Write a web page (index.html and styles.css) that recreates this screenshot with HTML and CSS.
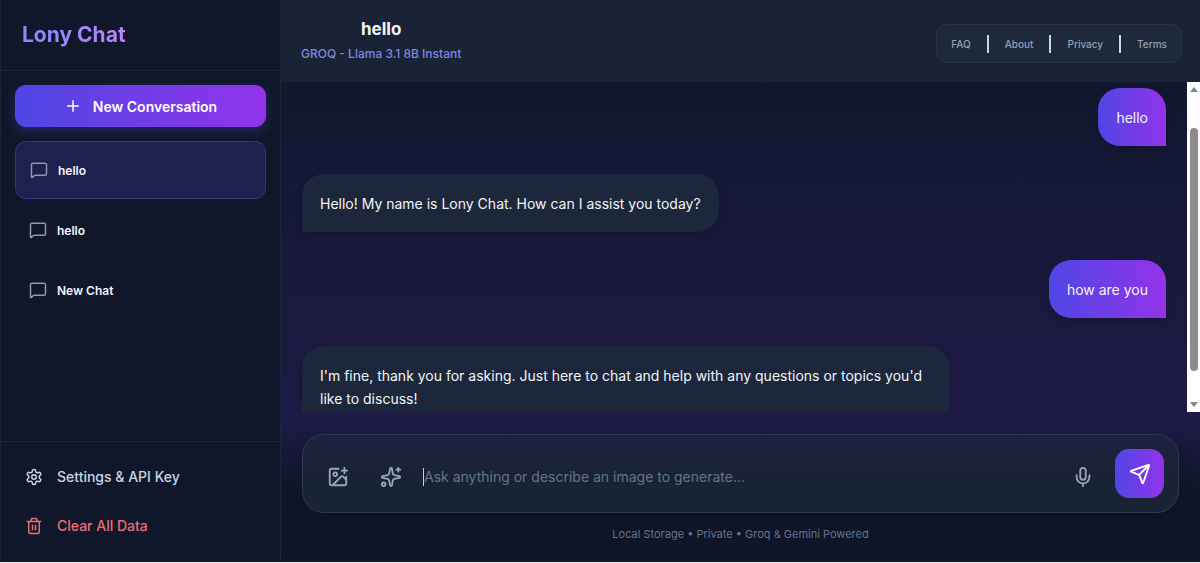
FILE: index.html
```html
<!DOCTYPE html>
<html lang="en">
<head>
<meta charset="utf-8">
<meta name="viewport" content="width=device-width, initial-scale=1">
<title>Lony Chat</title>
<link rel="stylesheet" href="styles.css">
</head>
<body>
<svg class="sprite" aria-hidden="true">
  <symbol id="message" viewBox="0 0 24 24"><path d="M22 17a2 2 0 0 1-2 2H6.8a2 2 0 0 0-1.4.6L3.2 21.8A.7.7 0 0 1 2 21.3V5a2 2 0 0 1 2-2h16a2 2 0 0 1 2 2z"/></symbol>
</svg>
<div class="app">
  <aside class="sidebar">
    <div class="brand"><h1 class="brand-name">Lony Chat</h1></div>
    <div class="conversations">
      <button class="new-chat" type="button">
        <svg class="icon icon-md" viewBox="0 0 24 24"><path d="M5 12h14M12 5v14"/></svg>
        New Conversation
      </button>
      <nav class="chat-list" aria-label="Conversations">
        <button class="chat-item active" type="button"><svg class="icon icon-md"><use href="#message"/></svg>hello</button>
        <button class="chat-item" type="button"><svg class="icon icon-md"><use href="#message"/></svg>hello</button>
        <button class="chat-item" type="button"><svg class="icon icon-md"><use href="#message"/></svg>New Chat</button>
      </nav>
    </div>
    <div class="sidebar-footer">
      <button class="side-action" type="button">
        <svg class="icon icon-md" viewBox="0 0 24 24"><path d="M12.22 2h-.44a2 2 0 0 0-2 2v.18a2 2 0 0 1-1 1.73l-.43.25a2 2 0 0 1-2 0l-.15-.08a2 2 0 0 0-2.73.73l-.22.38a2 2 0 0 0 .73 2.73l.15.1a2 2 0 0 1 1 1.72v.51a2 2 0 0 1-1 1.74l-.15.09a2 2 0 0 0-.73 2.73l.22.38a2 2 0 0 0 2.73.73l.15-.08a2 2 0 0 1 2 0l.43.25a2 2 0 0 1 1 1.73V20a2 2 0 0 0 2 2h.44a2 2 0 0 0 2-2v-.18a2 2 0 0 1 1-1.73l.43-.25a2 2 0 0 1 2 0l.15.08a2 2 0 0 0 2.73-.73l.22-.39a2 2 0 0 0-.73-2.73l-.15-.08a2 2 0 0 1-1-1.74v-.5a2 2 0 0 1 1-1.74l.15-.09a2 2 0 0 0 .73-2.73l-.22-.38a2 2 0 0 0-2.73-.73l-.15.08a2 2 0 0 1-2 0l-.43-.25a2 2 0 0 1-1-1.73V4a2 2 0 0 0-2-2z"/><circle cx="12" cy="12" r="3"/></svg>
        Settings &amp; API Key
      </button>
      <button class="side-action danger" type="button">
        <svg class="icon icon-md" viewBox="0 0 24 24"><path d="M3 6h18M19 6v14a2 2 0 0 1-2 2H7a2 2 0 0 1-2-2V6M8 6V4a2 2 0 0 1 2-2h4a2 2 0 0 1 2 2v2M10 11v6M14 11v6"/></svg>
        Clear All Data
      </button>
    </div>
  </aside>

  <main class="main">
    <header class="topbar">
      <div class="heading">
        <h2 class="chat-title">hello</h2>
        <p class="model">GROQ - Llama 3.1 8B Instant</p>
      </div>
      <nav class="links" aria-label="Information">
        <a class="link" href="#faq">FAQ</a><span class="divider"></span>
        <a class="link" href="#about">About</a><span class="divider"></span>
        <a class="link" href="#privacy">Privacy</a><span class="divider"></span>
        <a class="link" href="#terms">Terms</a>
      </nav>
    </header>

    <section class="stage">
      <div class="messages">
        <p class="bubble user">hello</p>
        <p class="bubble bot">Hello! My name is Lony Chat. How can I assist you today?</p>
        <p class="bubble user">how are you</p>
        <p class="bubble bot">I'm fine, thank you for asking. Just here to chat and help with any questions or topics you'd like to discuss!</p>
      </div>
      <div class="scrollbar" aria-hidden="true">
        <svg class="arrow" viewBox="0 0 8 5"><path d="M4 0l4 5H0z"/></svg>
        <div class="track"><div class="thumb"></div></div>
        <svg class="arrow" viewBox="0 0 8 5"><path d="M0 0h8L4 5z"/></svg>
      </div>
    </section>

    <footer class="composer">
      <form class="prompt">
        <button class="tool" type="button" aria-label="Add image">
          <svg class="icon icon-lg" viewBox="0 0 24 24"><path d="M16 5h6M19 2v6M21 11.5V19a2 2 0 0 1-2 2H5a2 2 0 0 1-2-2V5a2 2 0 0 1 2-2h7.5M21 15l-3.086-3.086a2 2 0 0 0-2.828 0L6 21"/><circle cx="9" cy="9" r="2"/></svg>
        </button>
        <button class="tool" type="button" aria-label="Generate image">
          <svg class="icon icon-lg" viewBox="0 0 24 24"><path d="M11.017 2.814a1 1 0 0 1 1.966 0l1.051 5.558a2 2 0 0 0 1.594 1.594l5.558 1.051a1 1 0 0 1 0 1.966l-5.558 1.051a2 2 0 0 0-1.594 1.594l-1.051 5.558a1 1 0 0 1-1.966 0l-1.051-5.558a2 2 0 0 0-1.594-1.594l-5.558-1.051a1 1 0 0 1 0-1.966l5.558-1.051a2 2 0 0 0 1.594-1.594zM20 2v4M22 4h-4"/><circle cx="4" cy="20" r="2"/></svg>
        </button>
        <span class="caret"></span>
        <input class="field" type="text" aria-label="Message" placeholder="Ask anything or describe an image to generate...">
        <button class="tool" type="button" aria-label="Voice input">
          <svg class="icon icon-lg" viewBox="0 0 24 24"><path d="M12 19v3M19 10v2a7 7 0 0 1-14 0v-2"/><rect x="9" y="2" width="6" height="13" rx="3"/></svg>
        </button>
        <button class="send" type="submit" aria-label="Send">
          <svg class="icon icon-lg" viewBox="0 0 24 24"><path d="M14.536 21.686a.5.5 0 0 0 .937-.024l6.5-19a.496.496 0 0 0-.635-.635l-19 6.5a.5.5 0 0 0-.024.937l7.93 3.18a2 2 0 0 1 1.112 1.11zM21.854 2.147l-10.94 10.939"/></svg>
        </button>
      </form>
      <p class="note">Local Storage • Private • Groq &amp; Gemini Powered</p>
    </footer>
  </main>
</div>
</body>
</html>
```

FILE: styles.css
```css
* { box-sizing: border-box; }

body {
  margin: 0;
  background: #e8e9f2;
  font-family: Inter, "Liberation Sans", sans-serif;
  color: #f1f5f9;
}

h1, h2, p { margin: 0; }

button, input { font: inherit; color: inherit; background: none; border: 0; padding: 0; }
button { cursor: pointer; }

.sprite { display: none; }

.icon {
  flex: none;
  fill: none;
  stroke: currentColor;
  stroke-width: 2;
  stroke-linecap: round;
  stroke-linejoin: round;
}
.icon-md { width: 18px; height: 18px; }
.icon-lg { width: 22px; height: 22px; }

.app {
  display: flex;
  height: calc(100vh - 1px);
  background: linear-gradient(#0f172a, #1e1a47 75%, #0f172a 87%, #101428);
}

/* Sidebar */
.sidebar {
  display: flex;
  flex-direction: column;
  flex: none;
  width: 281px;
  background: #10172a;
  border: solid #1c2438;
  border-width: 0 1px;
}

.brand {
  padding: 20px 21px 21px;
  border-bottom: 1px solid #1f2639;
}
.brand-name {
  width: max-content;
  font-size: 21px;
  line-height: 29px;
  font-weight: 700;
  color: transparent;
  background: linear-gradient(90deg, #818cf8, #c084fc);
  background-clip: text;
}

.conversations { flex: 1; min-height: 0; padding: 14px; overflow: hidden; }

.new-chat {
  display: flex;
  align-items: center;
  justify-content: center;
  gap: 11px;
  width: 100%;
  height: 42px;
  border-radius: 11px;
  background: linear-gradient(90deg, #4f46e5, #9333ea);
  box-shadow: 0 4px 12px #4f46e54d;
  font-size: 14px;
  font-weight: 600;
  color: #fff;
}

.chat-list { display: flex; flex-direction: column; gap: 2px; margin-top: 14px; }
.chat-item {
  display: flex;
  align-items: center;
  gap: 10px;
  height: 58px;
  padding: 0 14px;
  border-radius: 11px;
  font-size: 12px;
  font-weight: 600;
}
.chat-item .icon { color: #8f97ad; }
.chat-item.active { background: #1e204f; border: 1px solid #34377a; }

.sidebar-footer {
  display: flex;
  flex-direction: column;
  padding: 10px 14px 12px;
  border-top: 1px solid #1f2639;
}
.side-action {
  display: flex;
  align-items: center;
  gap: 14px;
  height: 49px;
  padding: 0 10px;
  font-size: 14px;
  font-weight: 500;
  color: #cbd5e1;
}
.danger { color: #ec6d74; }

/* Conversation */
.main { display: flex; flex-direction: column; flex: 1; min-width: 0; }

.topbar {
  display: flex;
  align-items: center;
  justify-content: space-between;
  height: 82px;
  padding: 0 18px 0 20px;
  background: #1a2335;
}
.heading { text-align: center; }
.chat-title { font-size: 17px; line-height: 25px; font-weight: 700; }
.model { font-size: 12px; line-height: 24px; font-weight: 500; color: #7f86e6; }

.links {
  display: flex;
  align-items: center;
  gap: 16px;
  height: 39px;
  margin-top: 5px;
  padding: 0 14px;
  background: #1e293b;
  border: 1px solid #29344a;
  border-radius: 11px;
}
.link { font-size: 10px; font-weight: 500; color: #94a0b3; text-decoration: none; }
.divider { width: 2px; height: 18px; background: #cbd5e1; }

.stage { display: flex; flex: 1; min-height: 0; }
.messages {
  display: flex;
  flex-direction: column;
  gap: 28px;
  flex: 1;
  padding: 6px 21px;
  overflow-y: auto;
  scrollbar-width: none;
}
.bubble {
  flex: none;
  max-width: 648px;
  padding: 18px 18px 17px;
  border-radius: 22px;
  font-size: 14px;
  line-height: 23px;
  box-shadow: 0 3px 8px #0000002e;
}
.user {
  align-self: flex-end;
  border-bottom-right-radius: 0;
  background: linear-gradient(90deg, #4f46e5, #9333ea);
}
.bot {
  align-self: flex-start;
  border-bottom-left-radius: 0;
  background: #1d273b;
}

.scrollbar {
  display: flex;
  flex-direction: column;
  align-items: center;
  width: 13px;
  padding: 5px 0;
  background: #fdfcff;
}
.arrow { width: 8px; height: 5px; fill: #858585; }
.track { flex: 1; padding: 36px 0 31px; }
.thumb { width: 8px; height: 100%; border-radius: 4px; background: #8b8b8d; }

/* Composer */
.composer { padding: 22px 21px 20px; }
.prompt {
  display: flex;
  align-items: center;
  height: 79px;
  padding: 0 14px;
  background: linear-gradient(#1c2240, #182333 75%);
  border: 1px solid #2e394e;
  border-radius: 22px;
  box-shadow: 0 6px 20px #00000026;
}
.tool {
  display: flex;
  align-items: center;
  justify-content: center;
  flex: none;
  width: 42px;
  height: 42px;
  margin: 6px 11px 0 0;
  color: #9aa6ba;
}
.caret { width: 1px; height: 18px; margin-top: 6px; background: #cbd5e1; }
.field { flex: 1; min-width: 0; margin-top: 6px; font-size: 14px; outline: 0; }
.field::placeholder { color: #64748b; opacity: 1; }
.send {
  display: flex;
  align-items: center;
  justify-content: center;
  flex: none;
  width: 49px;
  height: 49px;
  border-radius: 14px;
  background: linear-gradient(90deg, #4f46e5, #9333ea);
  color: #fff;
}
.note {
  margin-top: 13px;
  text-align: center;
  font-size: 11px;
  line-height: 16px;
  font-weight: 400;
  color: #64748b;
}
```
